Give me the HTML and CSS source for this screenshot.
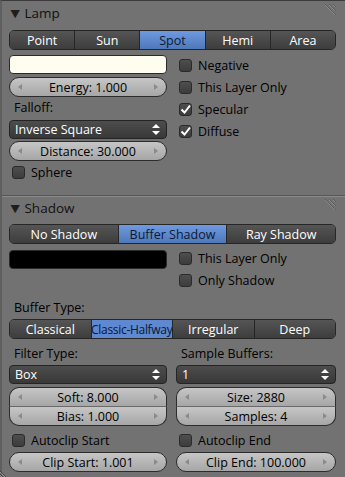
FILE: index.html
```html
<!DOCTYPE html>
<html lang="en">
<head>
    <meta charset="UTF-8">
    <title>Lamp Properties</title>
    <link rel="stylesheet" href="styles.css">
</head>
<body>
<div class="window">
    <!-- Lamp panel -->
    <div class="panel lamp">
        <div class="panel-header">
            <span class="tri">&#9660;</span><span class="title">Lamp</span>
            <svg class="grip" width="14" height="14" viewBox="0 0 14 14">
                <path d="M3 0 L14 11 M7 0 L14 7 M11 0 L14 3" stroke="#5a5a5a" stroke-width="1"/>
                <path d="M3 1 L13 11 M7 1 L13 7 M11 1 L13 3" stroke="#8c8c8c" stroke-width="1"/>
            </svg>
        </div>
        <div class="seg seg-lamp">
            <div class="btn">Point</div>
            <div class="btn">Sun</div>
            <div class="btn sel">Spot</div>
            <div class="btn">Hemi</div>
            <div class="btn">Area</div>
        </div>
        <div class="cols lamp-cols">
            <div class="col">
                <div class="swatch cream"></div>
                <div class="slider gap3"><span class="arr l"></span><span class="val">Energy: 1.000</span><span class="arr r"></span></div>
                <div class="label">Falloff:</div>
                <div class="menu gap1"><span class="val">Inverse Square</span>
                    <svg width="8" height="11" viewBox="0 0 8 11"><path d="M4 0 L8 4 L0 4 Z M0 7 L8 7 L4 11 Z" fill="#fff"/></svg>
                </div>
                <div class="slider gap2"><span class="arr l"></span><span class="val">Distance: 30.000</span><span class="arr r"></span></div>
                <div class="check"><span class="box"></span>Sphere</div>
            </div>
            <div class="col right">
                <div class="check"><span class="box"></span>Negative</div>
                <div class="check"><span class="box"></span>This Layer Only</div>
                <div class="check"><span class="box"><svg width="13" height="13" viewBox="0 0 13 13"><path d="M2.5 6.5 L5.5 9.5 L11 2.5" stroke="#fff" stroke-width="2" fill="none"/></svg></span>Specular</div>
                <div class="check"><span class="box"><svg width="13" height="13" viewBox="0 0 13 13"><path d="M2.5 6.5 L5.5 9.5 L11 2.5" stroke="#fff" stroke-width="2" fill="none"/></svg></span>Diffuse</div>
            </div>
        </div>
    </div>

    <!-- Shadow panel -->
    <div class="panel shadow">
        <div class="panel-header">
            <span class="tri">&#9660;</span><span class="title">Shadow</span>
            <svg class="grip" width="14" height="14" viewBox="0 0 14 14">
                <path d="M3 0 L14 11 M7 0 L14 7 M11 0 L14 3" stroke="#5a5a5a" stroke-width="1"/>
                <path d="M3 1 L13 11 M7 1 L13 7 M11 1 L13 3" stroke="#8c8c8c" stroke-width="1"/>
            </svg>
        </div>
        <div class="seg seg-shadow">
            <div class="btn">No Shadow</div>
            <div class="btn sel">Buffer Shadow</div>
            <div class="btn">Ray Shadow</div>
        </div>
        <div class="cols shadow-cols">
            <div class="col">
                <div class="swatch black"></div>
            </div>
            <div class="col right">
                <div class="check"><span class="box"></span>This Layer Only</div>
                <div class="check"><span class="box"></span>Only Shadow</div>
            </div>
        </div>
        <div class="label buf-label">Buffer Type:</div>
        <div class="seg seg-buffer">
            <div class="btn">Classical</div>
            <div class="btn sel flat">Classic-Halfway</div>
            <div class="btn">Irregular</div>
            <div class="btn">Deep</div>
        </div>
        <div class="cols buffer-cols">
            <div class="col">
                <div class="label">Filter Type:</div>
                <div class="menu"><span class="val">Box</span>
                    <svg width="8" height="11" viewBox="0 0 8 11"><path d="M4 0 L8 4 L0 4 Z M0 7 L8 7 L4 11 Z" fill="#fff"/></svg>
                </div>
                <div class="stack">
                    <div class="slider top"><span class="arr l"></span><span class="val">Soft: 8.000</span><span class="arr r"></span></div>
                    <div class="slider bottom"><span class="arr l"></span><span class="val">Bias: 1.000</span><span class="arr r"></span></div>
                </div>
                <div class="check"><span class="box"></span>Autoclip Start</div>
                <div class="slider"><span class="arr l"></span><span class="val">Clip Start: 1.001</span><span class="arr r"></span></div>
            </div>
            <div class="col">
                <div class="label">Sample Buffers:</div>
                <div class="menu"><span class="val">1</span>
                    <svg width="8" height="11" viewBox="0 0 8 11"><path d="M4 0 L8 4 L0 4 Z M0 7 L8 7 L4 11 Z" fill="#fff"/></svg>
                </div>
                <div class="stack">
                    <div class="slider top"><span class="arr l"></span><span class="val">Size: 2880</span><span class="arr r"></span></div>
                    <div class="slider bottom"><span class="arr l"></span><span class="val">Samples: 4</span><span class="arr r"></span></div>
                </div>
                <div class="check"><span class="box"></span>Autoclip End</div>
                <div class="slider"><span class="arr l"></span><span class="val">Clip End: 100.000</span><span class="arr r"></span></div>
            </div>
        </div>
    </div>

    <svg class="corner" width="8" height="8" viewBox="0 0 8 8">
        <path d="M0 2 L6 8 M0 5 L3 8" stroke="#3e3e3e" stroke-width="1"/>
        <path d="M0 3 L5 8 M0 6 L2 8" stroke="#9a9a9a" stroke-width="1"/>
    </svg>
</div>
</body>
</html>
```

FILE: styles.css
```css
body {
    margin: 0;
    background: #727272;
    font-family: "Open Sans", "DejaVu Sans", sans-serif;
    font-size: 12.5px;
    color: #000;
    width: 345px;
    height: 477px;
    overflow: hidden;
}
.window {
    position: relative;
    height: 476px;
    border-top: 1px solid #3c3c3c;
    border-left: 2px solid #5f5f5f;
    background: #727272;
}

/* panels */
.panel {
    padding: 0 9px 0 7px;
}
.lamp {
    height: 194px;
}
.shadow {
    border-top: 1px solid #565656;
    box-shadow: inset 0 1px 0 #8a8a8a;
}
.panel-header {
    position: relative;
    display: flex;
    align-items: center;
    height: 23px;
    font-size: 13.5px;
    color: #111;
}
.tri {
    font-size: 11px;
    margin: 0 5px 0 2px;
    color: #1e1e1e;
    transform: scaleX(1.1);
}
.grip {
    position: absolute;
    right: 0;
    top: 3px;
}

/* segmented rows */
.seg {
    display: flex;
    margin-top: 6px;
    height: 20px;
    border: 1px solid #262626;
    border-radius: 5px;
    overflow: hidden;
    box-sizing: border-box;
}
.seg-shadow {
    margin-top: 5px;
}
.btn {
    flex: 1 1 0;
    min-width: 0;
    white-space: nowrap;
    display: flex;
    align-items: center;
    justify-content: center;
    color: #fff;
    background: linear-gradient(#555, #3d3d3d);
    border-left: 1px solid #262626;
}
.btn:first-child {
    border-left: none;
}
.btn.sel {
    color: #0b1a33;
    background: linear-gradient(#6f9ae0, #4f78ba);
}
.btn.flat {
    color: #08173a;
    background: #5e88cf;
    font-size: 12px;
    letter-spacing: -0.3px;
}

/* two columns */
.cols {
    display: grid;
    grid-template-columns: 158px 160px;
    column-gap: 9px;
}
.lamp-cols {
    margin-top: 5px;
}
.col {
    display: flex;
    flex-direction: column;
}
.col.right {
    margin-top: -1px;
}

.swatch {
    height: 19px;
    border: 1px solid #2a2a2a;
    border-radius: 4px;
    box-sizing: border-box;
}
.cream {
    background: #fffdf0;
}
.black {
    background: #000;
    margin-top: 2px;
}

.label {
    height: 22px;
    line-height: 22px;
    padding-left: 5px;
}

.slider {
    display: flex;
    align-items: center;
    height: 20px;
    border: 1px solid #2c2c2c;
    border-radius: 10px;
    box-sizing: border-box;
    background: linear-gradient(#c6c6c6, #a6a6a6);
    padding: 0 8px;
}
.slider .val {
    flex: 1;
    text-align: center;
}
.arr {
    width: 0;
    height: 0;
    border-top: 3px solid transparent;
    border-bottom: 3px solid transparent;
}
.arr.l {
    border-right: 4px solid #8a8a8a;
}
.arr.r {
    border-left: 4px solid #8a8a8a;
}
.gap1 { margin-top: 1px; }
.gap2 { margin-top: 2px; }
.gap3 { margin-top: 3px; }

.stack {
    margin-top: 3px;
}
.slider.top {
    border-radius: 10px 10px 0 0;
    border-bottom: none;
    height: 19px;
}
.slider.bottom {
    border-radius: 0 0 10px 10px;
    border-top: 1px solid #6a6a6a;
}

.menu {
    display: flex;
    align-items: center;
    height: 19px;
    padding: 0 6px 0 5px;
    border: 1px solid #242424;
    border-radius: 4px;
    box-sizing: border-box;
    color: #fff;
    background: linear-gradient(#4d4d4d, #383838);
}
.menu .val {
    flex: 1;
}

.check {
    display: flex;
    align-items: center;
    height: 22px;
    padding-left: 3px;
}
.box {
    width: 13px;
    height: 13px;
    margin-right: 6px;
    border: 1px solid #2a2a2a;
    border-radius: 3px;
    background: linear-gradient(#4e4e4e, #3c3c3c);
    box-sizing: border-box;
    display: flex;
    align-items: center;
    justify-content: center;
}
.box svg {
    flex: none;
}

/* shadow section */
.shadow-cols {
    margin-top: 4px;
}
.buf-label {
    margin-top: 6px;
}
.seg-buffer {
    margin-top: 0;
}
.buffer-cols {
    margin-top: 4px;
}
.buffer-cols .check {
    margin-top: 3px;
}
.buffer-cols .col > .check + .slider {
    margin-top: 1px;
}

.corner {
    position: absolute;
    left: -2px;
    bottom: 0;
}
```
